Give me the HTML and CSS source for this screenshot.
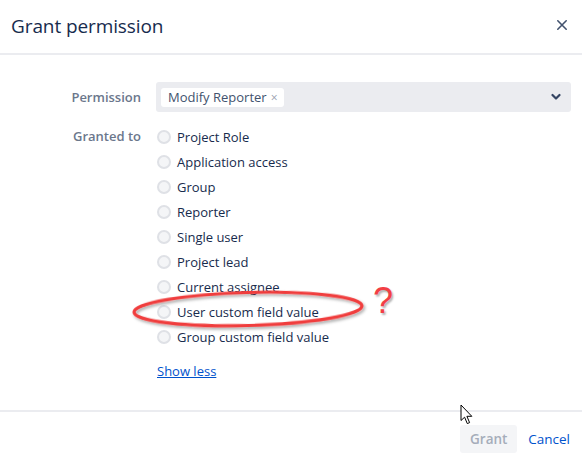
FILE: index.html
```html
<!DOCTYPE html>
<html lang="en">
<head>
<meta charset="utf-8">
<title>Grant permission</title>
<link rel="stylesheet" href="styles.css">
</head>
<body>
<div class="dialog">
  <header class="dialog-header">
    <h1 class="dialog-title">Grant permission</h1>
    <button class="close-btn" aria-label="Close">
      <svg width="12" height="12" viewBox="0 0 12 12"><path d="M1.8 1.8 L10.2 10.2 M10.2 1.8 L1.8 10.2" stroke="#42526e" stroke-width="1.6" stroke-linecap="round"/></svg>
    </button>
  </header>

  <main class="dialog-body">
    <div class="form-row">
      <label class="form-label">Permission</label>
      <div class="select">
        <span class="tag">Modify Reporter <span class="tag-x">×</span></span>
        <svg class="chevron" width="10" height="8" viewBox="0 0 10 8"><path d="M1.5 2 L5 5.5 L8.5 2" fill="none" stroke="#344563" stroke-width="2.2" stroke-linecap="round" stroke-linejoin="round"/></svg>
      </div>
    </div>

    <div class="form-row granted">
      <label class="form-label">Granted to</label>
      <div class="options">
        <div class="radio-list">
          <label class="radio"><span class="dot"></span>Project Role</label>
          <label class="radio"><span class="dot"></span>Application access</label>
          <label class="radio"><span class="dot"></span>Group</label>
          <label class="radio"><span class="dot"></span>Reporter</label>
          <label class="radio"><span class="dot"></span>Single user</label>
          <label class="radio"><span class="dot"></span>Project lead</label>
          <label class="radio"><span class="dot"></span>Current assignee</label>
          <label class="radio"><span class="dot"></span>User custom field value</label>
          <label class="radio"><span class="dot"></span>Group custom field value</label>
        </div>
        <a class="show-less" href="#">Show less</a>
      </div>
    </div>
  </main>

  <footer class="dialog-footer">
    <button class="btn-grant" disabled>Grant</button>
    <a class="btn-cancel" href="#">Cancel</a>
  </footer>

  <!-- red hand-drawn markup on top of the form -->
  <svg class="markup-ring" width="250" height="50" viewBox="0 0 250 50">
    <defs>
      <filter id="soft" x="-10%" y="-30%" width="120%" height="160%">
        <feDropShadow dx="1.5" dy="2" stdDeviation="1.5" flood-color="#000" flood-opacity="0.35"/>
      </filter>
    </defs>
    <ellipse cx="125" cy="25" rx="114" ry="16.5" transform="rotate(-1.6 125 25)" fill="none" stroke="#f03c3c" stroke-width="3.2" filter="url(#soft)"/>
  </svg>
  <span class="markup-q">?</span>

  <svg class="pointer" width="14" height="22" viewBox="0 0 14 22">
    <path d="M1 1 L1 16.5 L4.6 13.2 L7.3 19.6 L9.6 18.6 L6.9 12.3 L11.8 12.3 Z" fill="#fff" stroke="#000" stroke-width="1" stroke-linejoin="round"/>
  </svg>
</div>
</body>
</html>
```

FILE: styles.css
```css
* { box-sizing: border-box; }

html, body {
  margin: 0;
  padding: 0;
  background: #fff;
}

body {
  font-family: "Open Sans", "Noto Sans", "Liberation Sans", sans-serif;
  color: #172b4d;
  font-size: 13px;
}

.dialog {
  position: relative;
  width: 582px;
  height: 456px;
  display: flex;
  flex-direction: column;
  overflow: hidden;
}

.dialog-header {
  height: 55px;
  flex: none;
  display: flex;
  align-items: center;
  justify-content: space-between;
  padding: 0 13px 2px 11px;
  border-bottom: 2px solid #ebecf0;
}

.dialog-title {
  margin: 0;
  font-size: 19px;
  font-weight: 400;
  color: #172b4d;
  letter-spacing: -0.1px;
}

.close-btn {
  border: 0;
  background: none;
  padding: 0;
  width: 14px;
  height: 14px;
  display: flex;
  align-items: center;
  justify-content: center;
  margin-top: -2px;
}

.dialog-body {
  flex: 1;
  padding: 27px 11px 0 0;
  display: flex;
  flex-direction: column;
  gap: 15px;
}

.form-row {
  display: grid;
  grid-template-columns: 141px 1fr;
  column-gap: 15px;
  align-items: center;
}

.form-row.granted {
  align-items: start;
}

.form-label {
  text-align: right;
  color: #6b778c;
  font-weight: 600;
  font-size: 13px;
}

.granted .form-label {
  line-height: 25px;
  margin-top: -3px;
}

.select {
  height: 30px;
  background: #ebecf0;
  border-radius: 3px;
  display: flex;
  align-items: center;
  justify-content: space-between;
  padding: 0 10px 0 5px;
}

.tag {
  background: #fff;
  border-radius: 3px;
  height: 19px;
  line-height: 19px;
  padding: 0 6px 0 7px;
  color: #42526e;
  font-size: 13px;
  display: inline-flex;
  align-items: center;
}

.tag-x {
  color: #97a0af;
  font-size: 12px;
  margin-left: 4px;
}

.chevron {
  display: block;
}

.options {
  display: flex;
  flex-direction: column;
  margin-top: -3px;
}

.radio-list {
  display: flex;
  flex-direction: column;
}

.radio {
  height: 25px;
  display: flex;
  align-items: center;
  gap: 6px;
  font-size: 13px;
  color: #172b4d;
  margin-left: 1px;
}

.dot {
  width: 14px;
  height: 14px;
  border-radius: 50%;
  border: 2px solid #dfe1e6;
  background: #f4f5f7;
  flex: none;
}

.show-less {
  margin-top: 13px;
  margin-left: 1px;
  color: #0052cc;
  font-size: 13px;
  text-decoration: underline;
  align-self: flex-start;
}

.dialog-footer {
  height: 46px;
  flex: none;
  border-top: 2px solid #ebecf0;
  display: flex;
  align-items: center;
  justify-content: flex-end;
  gap: 11px;
  padding: 10px 12px 0 0;
}

.btn-grant {
  border: 0;
  height: 28px;
  width: 57px;
  border-radius: 3px;
  background: #f4f5f7;
  color: #a5adba;
  font-family: inherit;
  font-size: 13.5px;
  font-weight: 600;
}

.btn-cancel {
  color: #0052cc;
  text-decoration: none;
  font-size: 13.5px;
}

.markup-ring {
  position: absolute;
  left: 123px;
  top: 284px;
}

.markup-q {
  position: absolute;
  left: 373px;
  top: 281px;
  font-family: "Liberation Sans", sans-serif;
  font-size: 36px;
  line-height: 40px;
  color: #f23f45;
  text-shadow: 1.5px 2px 2px rgba(0, 0, 0, 0.3);
}

.pointer {
  position: absolute;
  left: 460px;
  top: 404px;
}
```
